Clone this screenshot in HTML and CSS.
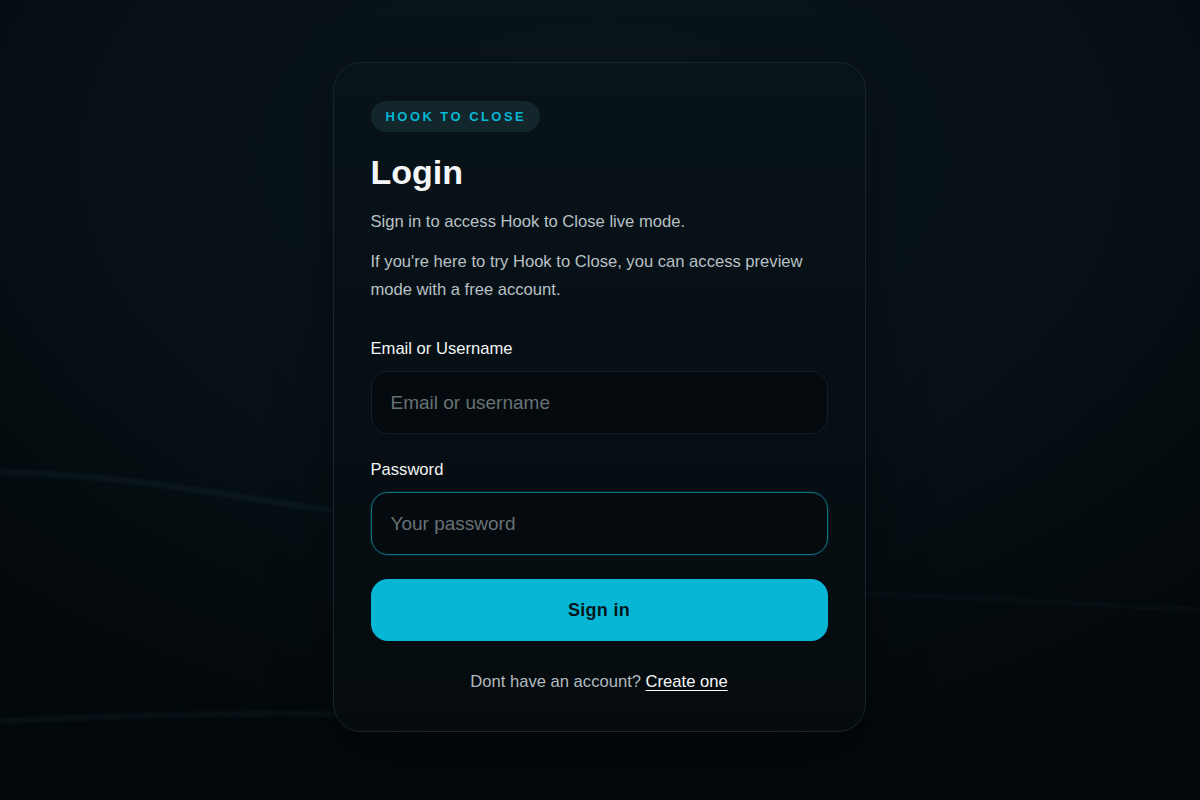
FILE: index.html
```html
<!DOCTYPE html>
<html lang="en">
<head>
<meta charset="utf-8">
<title>Login - Hook to Close</title>
<link rel="stylesheet" href="styles.css">
</head>
<body>
<svg class="bg-lines" viewBox="0 0 1200 800" preserveAspectRatio="none" aria-hidden="true">
  <defs>
    <filter id="soft" x="-10%" y="-50%" width="120%" height="200%">
      <feGaussianBlur stdDeviation="2"/>
    </filter>
  </defs>
  <path d="M0 472 C 120 474, 230 496, 335 511" stroke="#1a3944" stroke-width="3" fill="none" opacity="0.45" filter="url(#soft)"/>
  <path d="M0 721 C 150 714, 300 712, 335 715" stroke="#162a31" stroke-width="4" fill="none" opacity="0.45" filter="url(#soft)"/>
  <path d="M865 594 C 980 598, 1100 604, 1200 610" stroke="#15282f" stroke-width="3" fill="none" opacity="0.35" filter="url(#soft)"/>
</svg>
<main class="page">
  <section class="card">
    <span class="badge">HOOK TO CLOSE</span>
    <h1 class="title">Login</h1>
    <p class="lead">Sign in to access Hook to Close live mode.</p>
    <p class="lead">If you're here to try Hook to Close, you can access preview mode with a free account.</p>
    <form class="form">
      <label class="field">
        <span class="label">Email or Username</span>
        <input class="input" type="text" placeholder="Email or username">
      </label>
      <label class="field">
        <span class="label">Password</span>
        <input class="input input-focus" type="password" placeholder="Your password" autofocus>
      </label>
      <button class="btn" type="button">Sign in</button>
    </form>
    <p class="foot">Dont have an account? <a href="#" class="link">Create one</a></p>
  </section>
</main>
</body>
</html>
```
FILE: styles.css
```css
* { box-sizing: border-box; }
html, body { height: 100%; }
body {
  margin: 0;
  font-family: "Liberation Sans", Arial, sans-serif;
  background: radial-gradient(ellipse 900px 600px at 50% 20%, #0b171c 0%, #071116 55%, #03080b 100%);
  color: #f3f5f6;
  overflow: hidden;
  position: relative;
}
.bg-lines {
  position: absolute;
  left: 0; top: 0;
  width: 100%; height: 100%;
  pointer-events: none;
}
.page {
  position: relative;
  min-height: 100%;
  display: flex;
  justify-content: center;
  align-items: flex-start;
  padding: 62px 2px 0 0;
}
.card {
  width: 533px;
  padding: 38px 37px 39px;
  border: 1px solid #15272d;
  border-radius: 28px;
  background: linear-gradient(180deg, #08131a 0%, #050b0e 100%);
  box-shadow: 0 20px 60px rgba(0,0,0,0.35);
}
.badge {
  display: inline-block;
  height: 31px;
  line-height: 31px;
  padding: 0 14px 0 15px;
  border-radius: 16px;
  background: #12262b;
  color: #06b6d4;
  font-size: 13px;
  font-weight: 700;
  letter-spacing: 2.45px;
}
.title {
  margin: 20px 0 16px;
  font-size: 34px;
  line-height: 40px;
  font-weight: 700;
  color: #f4f6f7;
}
.lead {
  margin: 0 0 12px;
  font-size: 16.6px;
  line-height: 28px;
  color: #b9c1c5;
}
.form {
  margin-top: 35px;
  display: flex;
  flex-direction: column;
}
.field {
  display: flex;
  flex-direction: column;
  margin-bottom: 26px;
}
.label {
  font-size: 16.6px;
  line-height: 20px;
  margin-bottom: 12px;
  color: #f1f3f4;
}
.input {
  height: 63px;
  padding: 0 19px;
  border: 1px solid #10212a;
  border-radius: 17px;
  background: #040a0d;
  color: #e8ecee;
  font-family: "Liberation Sans", Arial, sans-serif;
  font-size: 19px;
  outline: none;
  caret-color: #c9d1d4;
}
.input::placeholder { color: #687276; }
.input-focus, .input:focus {
  border: 1.5px solid #0f7282;
  box-shadow: 0 0 0 1px rgba(6,182,212,0.10);
}
.btn {
  margin-top: -2px;
  height: 62px;
  border: none;
  border-radius: 17px;
  background: #06b6d4;
  color: #06171c;
  font-family: "Liberation Sans", Arial, sans-serif;
  font-size: 18px;
  font-weight: 700;
  letter-spacing: 0.3px;
}
.foot {
  margin: 31px 0 0;
  text-align: center;
  font-size: 16.6px;
  line-height: 20px;
  color: #b3bbbf;
}
.link {
  color: #f6f8f9;
  text-decoration: underline;
  text-underline-offset: 3px;
}
```
